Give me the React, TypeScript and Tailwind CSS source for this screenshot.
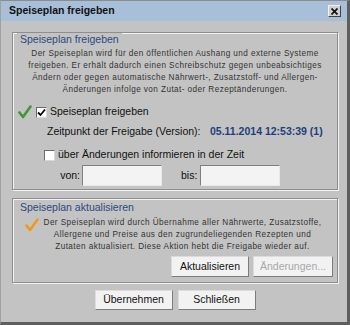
import React from "react";

const Check = ({ color }: { color: string }) => (
  <svg width="14" height="14" viewBox="0 0 14 14">
    <path d="M1.5 7.5 L5 12 L12.5 1.5" fill="none" stroke={color} strokeWidth="2.6" strokeLinecap="round" strokeLinejoin="round" />
  </svg>
);

const Box = ({ checked }: { checked?: boolean }) => (
  <div className="w-[11px] h-[11px] bg-white border border-t-[#6a6a6a] border-l-[#6a6a6a] border-r-[#d8d8d8] border-b-[#d8d8d8] flex items-center justify-center">
    {checked && (
      <svg width="9" height="9" viewBox="0 0 9 9">
        <path d="M1 4.5 L3.5 7 L8 1.5" fill="none" stroke="#000" strokeWidth="1.8" />
      </svg>
    )}
  </div>
);

const Btn = ({ children, w, disabled }: { children: React.ReactNode; w: string; disabled?: boolean }) => (
  <div
    className={`${w} h-full flex items-center justify-center bg-[#f2f2f2] border border-t-[#dcdcdc] border-l-[#dcdcdc] border-r-[#7c7c7c] border-b-[#7c7c7c] text-[10.5px] ${disabled ? "text-[#a8a8a8]" : "text-[#111]"}`}
  >
    {children}
  </div>
);

const Input = () => (
  <div className="w-[80px] h-[21px] bg-[#f3f3f3] border border-t-[#808080] border-l-[#808080] border-r-[#e8e8e8] border-b-[#e8e8e8]" />
);

export default function App() {
  return (
    <div className="w-[350px] h-[325px] bg-[#c3c3c3] border-t border-l border-t-[#8c8c8c] border-l-[#a0a0a0] border-r-[3px] border-b-[3px] border-r-[#5e5e5e] border-b-[#5e5e5e] flex flex-col font-['Liberation_Sans',Arial,sans-serif] overflow-hidden">
      <div className="h-[20px] bg-[#a7bfd9] flex items-center justify-between pl-[8px] pr-[6px] shrink-0">
        <span className="text-[10.5px] font-bold text-[#111]">Speiseplan freigeben</span>
        <div className="w-[13px] h-[12px] bg-[#cfcfcf] border border-t-[#f0f0f0] border-l-[#f0f0f0] border-r-[#404040] border-b-[#404040] flex items-center justify-center">
          <svg width="7" height="7" viewBox="0 0 7 7">
            <path d="M0.5 0.5 L6.5 6.5 M6.5 0.5 L0.5 6.5" stroke="#111" strokeWidth="1.7" />
          </svg>
        </div>
      </div>

      <div className="flex flex-col pl-[11px] pr-[9px] pt-[11px]">
        {/* Group 1 */}
        <div className="relative h-[158px] border border-[#8e8e8e] shadow-[inset_1px_1px_0_#f2f2f2,1px_1px_0_#f2f2f2] flex flex-col pt-[15px]">
          <span className="absolute top-[0px] left-[4px] px-[3px] bg-[#c3c3c3] text-[10.5px] leading-[12px] text-[#2b4a80]">
            Speiseplan freigeben
          </span>
          <div className="text-center text-[8.2px] leading-[12px] tracking-[0.42px] text-[#333]">
            Der Speiseplan wird für den öffentlichen Aushang und externe Systeme
            <br />
            freigeben. Er erhält dadurch einen Schreibschutz gegen unbeabsichtiges
            <br />
            Ändern oder gegen automatische Nährwert-, Zusatzstoff- und Allergen-
            <br />
            Änderungen infolge von Zutat- oder Rezeptänderungen.
          </div>
          <div className="mt-[9px] h-[14px] flex items-center pl-[5px]">
            <Check color="#3c9a2e" />
            <div className="ml-[4px]">
              <Box checked />
            </div>
            <span className="ml-[3px] text-[10.5px] text-[#111]">Speiseplan freigeben</span>
          </div>
          <div className="mt-[6px] h-[14px] flex items-center pl-[34px] text-[10.5px] text-[#111]">
            <span className="w-[163px]">Zeitpunkt der Freigabe (Version):</span>
            <span className="font-bold text-[#1f3f7c]">05.11.2014 12:53:39 (1)</span>
          </div>
          <div className="mt-[9px] h-[14px] flex items-center pl-[31px]">
            <Box />
            <span className="ml-[3px] text-[10.5px] text-[#111]">über Änderungen informieren in der Zeit</span>
          </div>
          <div className="mt-[3px] flex items-center pl-[47px] text-[10.5px] text-[#111]">
            <span className="w-[20px] text-right">von:</span>
            <div className="ml-[2px]">
              <Input />
            </div>
            <span className="ml-[19px]">bis:</span>
            <div className="ml-[3px]">
              <Input />
            </div>
          </div>
        </div>

        {/* Group 2 */}
        <div className="relative mt-[8px] h-[85px] border border-[#8e8e8e] shadow-[inset_1px_1px_0_#f2f2f2,1px_1px_0_#f2f2f2] flex flex-col pt-[18px]">
          <span className="absolute top-[2px] left-[4px] px-[3px] bg-[#c3c3c3] text-[10.5px] leading-[12px] text-[#2b4a80]">
            Speiseplan aktualisieren
          </span>
          <div className="flex pl-[12px] pr-[11px]">
            <div className="pt-[1px]">
              <Check color="#f09a1a" />
            </div>
            <div className="flex-1 text-center text-[8.2px] leading-[12px] tracking-[0.42px] text-[#333]">
              Der Speiseplan wird durch Übernahme aller Nährwerte, Zusatzstoffe,
              <br />
              Allergene und Preise aus den zugrundeliegenden Rezepten und
              <br />
              Zutaten aktualisiert. Diese Aktion hebt die Freigabe wieder auf.
            </div>
          </div>
          <div className="mt-[3px] h-[21px] flex justify-end gap-[4px] pr-[4px]">
            <Btn w="w-[78px]">Aktualisieren</Btn>
            <Btn w="w-[80px]" disabled>
              Änderungen...
            </Btn>
          </div>
        </div>

        <div className="mt-[7px] h-[20px] flex justify-center gap-[5px]">
          <Btn w="w-[78px]">Übernehmen</Btn>
          <Btn w="w-[78px]">Schließen</Btn>
        </div>
      </div>
    </div>
  );
}
